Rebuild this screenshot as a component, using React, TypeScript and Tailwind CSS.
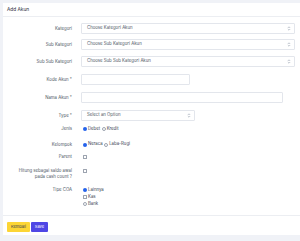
import React from "react"

const font = { fontFamily: "Inter, 'Liberation Sans', Arial, sans-serif" }

function Arrow() {
  return (
    <svg width="4" height="5" viewBox="0 0 4 5" className="text-gray-400">
      <path d="M0.8 2 L2 0.8 L3.2 2 M0.8 3 L2 4.2 L3.2 3" fill="none" stroke="currentColor" strokeWidth="0.6" />
    </svg>
  )
}

function Select({ text, w }: { text: string; w: string }) {
  return (
    <div className={`flex h-[11px] ${w} items-center justify-between rounded-[1px] border border-[#e3e6ec] bg-white pl-[5px] pr-[3px] text-[4.3px] text-[#4b5563]`}>
      <span>{text}</span>
      <Arrow />
    </div>
  )
}

function Input({ w }: { w: string }) {
  return <div className={`h-[11px] ${w} rounded-[1px] border border-[#e3e6ec] bg-white`} />
}

function Radio({ checked, label }: { checked?: boolean; label: string }) {
  return (
    <span className="flex items-center gap-[1px]">
      {checked ? (
        <span className="h-[4px] w-[4px] rounded-full bg-[#2563eb]" />
      ) : (
        <span className="h-[4px] w-[4px] rounded-full border border-[#9ca3af] bg-white" />
      )}
      <span>{label}</span>
    </span>
  )
}

function Check() {
  return <span className="block h-[4px] w-[4px] rounded-[0.5px] border border-[#9ca3af] bg-white" />
}

function Row({ label, children, className = "", align = "items-center" }: { label: React.ReactNode; children: React.ReactNode; className?: string; align?: string }) {
  return (
    <div className={`flex ${align} ${className}`}>
      <div className="w-[69px] text-right text-[4.3px] leading-[5.5px] text-[#4b5563]">{label}</div>
      <div className="ml-[9px] flex-1">{children}</div>
    </div>
  )
}

export default function App() {
  return (
    <div className="min-h-screen bg-[#f0f2f7] pl-[3px] pt-[3px]" style={font}>
      <div className="w-[297px] bg-white">
        <div className="flex h-[14px] items-center border-b border-[#eceef2] px-[4px] text-[4.8px] text-[#1f2937]">
          Add Akun
        </div>

        <div className="pb-[8px] pt-[6px]">
          <Row label="Kategori">
            <Select text="Choose Kategori Akun" w="w-[214px]" />
          </Row>
          <Row label="Sub Kategori" className="mt-[5px]">
            <Select text="Choose Sub Kategori Akun" w="w-[214px]" />
          </Row>
          <Row label="Sub Sub Kategori" className="mt-[6px]">
            <Select text="Choose Sub Sub Kategori Akun" w="w-[214px]" />
          </Row>
          <Row label="Kode Akun *" className="mt-[7px]">
            <Input w="w-[109px]" />
          </Row>
          <Row label="Nama Akun *" className="mt-[7px]">
            <Input w="w-[202px]" />
          </Row>
          <Row label="Type *" className="mt-[7px]">
            <Select text="Select an Option" w="w-[114px]" />
          </Row>
          <Row label="Jenis" className="mt-[5px]">
            <div className="flex items-center gap-[1.5px] pl-[2px] text-[4.3px] text-[#374151]">
              <Radio checked label="Debet" />
              <Radio label="Kredit" />
            </div>
          </Row>
          <Row label="Kelompok" className="mt-[9px]">
            <div className="flex items-center gap-[1.5px] pl-[2px] text-[4.3px] text-[#374151]">
              <Radio checked label="Neraca" />
              <Radio label="Laba-Rugi" />
            </div>
          </Row>
          <Row label="Parent" className="mt-[6px]">
            <div className="pl-[2px]">
              <Check />
            </div>
          </Row>
          <Row
            label={
              <>
                Hitung sebagai saldo awal
                <br />
                pada cash count ?
              </>
            }
            align="items-start"
            className="mt-[9px]"
          >
            <div className="pl-[2px] pt-[1px]">
              <Check />
            </div>
          </Row>
          <Row label="Tipe COA" align="items-start" className="mt-[8px]">
            <div className="flex flex-col gap-[1.5px] pl-[2px] text-[4.3px] leading-[5.5px] text-[#374151]">
              <Radio checked label="Lainnya" />
              <span className="flex items-center gap-[1px]">
                <Check />
                <span>Kas</span>
              </span>
              <Radio label="Bank" />
            </div>
          </Row>
        </div>

        <div className="flex gap-[1px] border-t border-[#eceef2] px-[4px] pb-[3px] pt-[6px]">
          <button className="h-[10px] w-[23px] rounded-[1px] bg-[#fcd535] text-[4px] text-[#374151]">Kembali</button>
          <button className="h-[10px] w-[17px] rounded-[1px] bg-[#4f46e5] text-[4px] text-white">Save</button>
        </div>
      </div>
    </div>
  )
}
